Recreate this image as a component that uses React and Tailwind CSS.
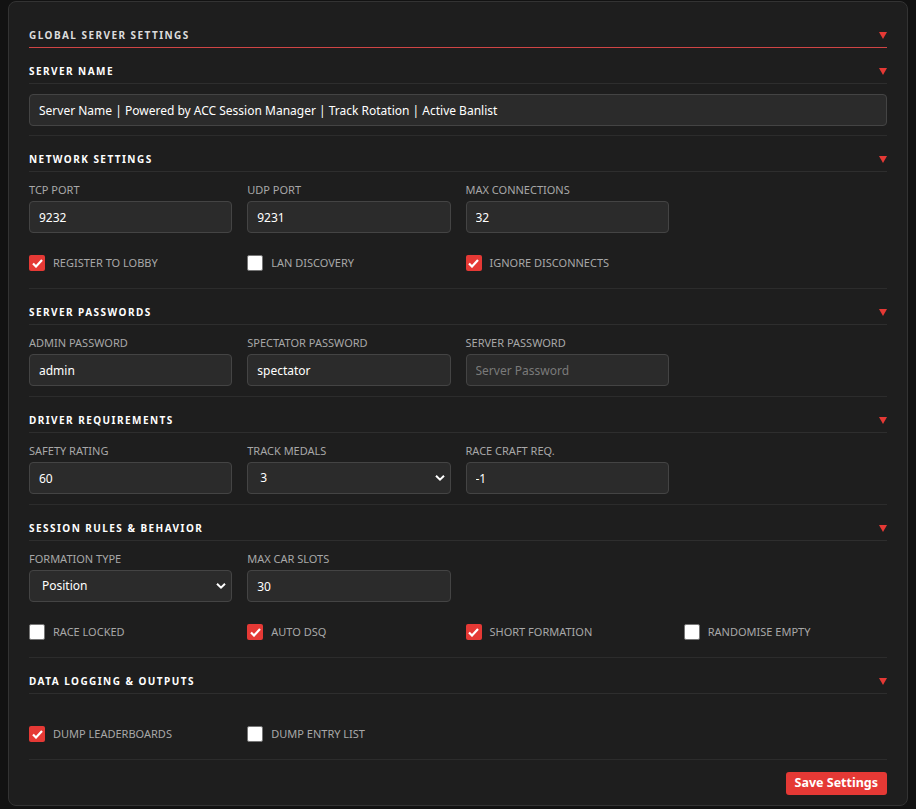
import React from 'react';

const font = { fontFamily: '"Noto Sans", "Open Sans", sans-serif' };

const Caret = () => (
  <svg width="8" height="7" viewBox="0 0 8 7" className="shrink-0">
    <path d="M0 0h8L4 7z" fill="#e53935" />
  </svg>
);

const SectionHeader = ({ title, global }) => (
  <div
    className={`flex items-center justify-between pt-[16px] pb-[5px] border-b ${
      global ? 'border-[#d04545]' : 'border-[#2e2e2e]'
    }`}
  >
    <span
      className={`text-[10px] leading-[14px] font-bold uppercase tracking-[1.45px] ${
        global ? 'text-[#dcdcdc]' : 'text-white'
      }`}
    >
      {title}
    </span>
    <Caret />
  </div>
);

const Field = ({ label, value, placeholder }) => (
  <div className="flex flex-col gap-[3px]">
    <label className="text-[11px] leading-[16px] uppercase text-[#a8a8a8]">{label}</label>
    <input
      readOnly
      value={value || ''}
      placeholder={placeholder}
      className="h-8 w-full rounded bg-[#2b2b2b] border border-[#444] px-[9px] text-[12px] text-white placeholder:text-[#7a7a7a] outline-none"
    />
  </div>
);

const Select = ({ label, value }) => (
  <div className="flex flex-col gap-[3px]">
    <label className="text-[11px] leading-[16px] uppercase text-[#a8a8a8]">{label}</label>
    <div className="relative">
      <div className="h-8 w-full rounded bg-[#2b2b2b] border border-[#444] pl-3 flex items-center text-[12px] text-white">
        {value}
      </div>
      <svg
        width="10"
        height="7"
        viewBox="0 0 10 7"
        className="absolute right-[6px] top-1/2 -translate-y-1/2"
      >
        <path d="M1 1.2l4 4 4-4" stroke="#fff" strokeWidth="2" fill="none" />
      </svg>
    </div>
  </div>
);

const Check = ({ label, checked }) => (
  <div className="flex items-center gap-2 h-4">
    {checked ? (
      <span className="w-4 h-4 rounded-[2px] bg-[#e53935] flex items-center justify-center">
        <svg width="11" height="9" viewBox="0 0 11 9">
          <path d="M1 4.5l3 3L10 1" stroke="#fff" strokeWidth="2.2" fill="none" />
        </svg>
      </span>
    ) : (
      <span className="w-4 h-4 rounded-[2px] bg-white border border-[#767676]" />
    )}
    <span className="text-[11px] uppercase text-[#a8a8a8]">{label}</span>
  </div>
);

const Section = ({ title, children, tight }) => (
  <div className={`border-b border-[#2c2c2c] ${tight ? 'pb-[9px]' : 'pb-[10px]'}`}>
    <SectionHeader title={title} />
    <div className="pt-[10px]">{children}</div>
  </div>
);

const Grid = ({ children, className = '' }) => (
  <div className={`grid grid-cols-4 gap-x-[15px] ${className}`}>{children}</div>
);

export default function App() {
  return (
    <div className="min-h-screen bg-[#121212] px-2 pt-[1px]" style={font}>
      <div className="rounded-lg border border-[#333] bg-[#1e1e1e] px-5 pt-[10px] pb-[10px]">
        <SectionHeader title="Global Server Settings" global />

        <Section title="Server Name" tight>
          <input
            readOnly
            value="Server Name | Powered by ACC Session Manager | Track Rotation | Active Banlist"
            className="h-8 w-full rounded bg-[#2b2b2b] border border-[#444] px-[9px] text-[12px] text-white outline-none"
          />
        </Section>

        <Section title="Network Settings">
          <Grid>
            <Field label="TCP Port" value="9232" />
            <Field label="UDP Port" value="9231" />
            <Field label="Max Connections" value="32" />
          </Grid>
          <Grid className="mt-[22px] mb-[7px]">
            <Check label="Register to Lobby" checked />
            <Check label="LAN Discovery" />
            <Check label="Ignore Disconnects" checked />
          </Grid>
        </Section>

        <Section title="Server Passwords">
          <Grid>
            <Field label="Admin Password" value="admin" />
            <Field label="Spectator Password" value="spectator" />
            <Field label="Server Password" placeholder="Server Password" />
          </Grid>
        </Section>

        <Section title="Driver Requirements">
          <Grid>
            <Field label="Safety Rating" value="60" />
            <Select label="Track Medals" value="3" />
            <Field label="Race Craft Req." value="-1" />
          </Grid>
        </Section>

        <Section title="Session Rules & Behavior">
          <Grid>
            <Select label="Formation Type" value="Position" />
            <Field label="Max Car Slots" value="30" />
          </Grid>
          <Grid className="mt-[22px] mb-[7px]">
            <Check label="Race Locked" />
            <Check label="Auto DSQ" checked />
            <Check label="Short Formation" checked />
            <Check label="Randomise Empty" />
          </Grid>
        </Section>

        <Section title="Data Logging & Outputs">
          <Grid className="mt-[22px] mb-[7px]">
            <Check label="Dump Leaderboards" checked />
            <Check label="Dump Entry List" />
          </Grid>
        </Section>

        <div className="flex justify-end mt-[12px]">
          <button className="h-[23px] px-[9px] rounded-[3px] bg-[#e53935] text-white text-[12.5px] font-bold leading-none">
            Save Settings
          </button>
        </div>
      </div>
    </div>
  );
}
